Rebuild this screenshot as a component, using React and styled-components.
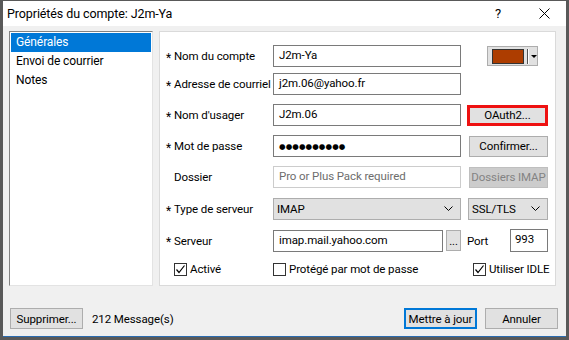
import styled, { createGlobalStyle } from "styled-components";

const GlobalStyle = createGlobalStyle`
  html, body {
    margin: 0;
    padding: 0;
    background: #ffffff;
  }
  body {
    font-family: Roboto, "Noto Sans", sans-serif;
    font-size: 11.5px;
    letter-spacing: -0.1px;
    color: #000;
  }
`;

const navItems = ["Générales", "Envoi de courrier", "Notes"];

function Check({ checked }) {
  return (
    <CheckBox>
      {checked && (
        <svg width="11" height="11" viewBox="0 0 11 11">
          <polyline
            points="1.5,5.5 4,8.5 9.5,1.5"
            fill="none"
            stroke="#000"
            strokeWidth="1.2"
          />
        </svg>
      )}
    </CheckBox>
  );
}

function Chevron() {
  return (
    <svg width="9" height="6" viewBox="0 0 9 6">
      <polyline points="0.5,0.5 4.5,4.5 8.5,0.5" fill="none" stroke="#000" strokeWidth="1" />
    </svg>
  );
}

function Label({ required, children }) {
  return (
    <LabelCell>
      <Star>{required ? "*" : ""}</Star>
      {children}
    </LabelCell>
  );
}

export default function App() {
  return (
    <>
      <GlobalStyle />
      <Window>
        <TitleBar>
          <Title>Propriétés du compte: J2m-Ya</Title>
          <TitleButtons>
            <HelpBtn>?</HelpBtn>
            <CloseBtn>
              <svg width="11" height="11" viewBox="0 0 11 11">
                <path d="M0.5 0.5 L10.5 10.5 M10.5 0.5 L0.5 10.5" stroke="#000" strokeWidth="1" />
              </svg>
            </CloseBtn>
          </TitleButtons>
        </TitleBar>
        <Body>
          <Main>
            <NavList>
              {navItems.map((item, i) => (
                <NavItem key={item} $active={i === 0}>
                  {item}
                </NavItem>
              ))}
            </NavList>
            <Panel>
              <Row $top={13}>
                <Label required>Nom du compte</Label>
                <Input>J2m-Ya</Input>
                <ColorPicker>
                  <Swatch />
                  <PickerSep />
                  <PickerArrow />
                </ColorPicker>
              </Row>
              <Row $top={6}>
                <Label required>Adresse de courriel</Label>
                <Input>j2m.06@yahoo.fr</Input>
              </Row>
              <Row>
                <Label required>Nom d'usager</Label>
                <Input>J2m.06</Input>
                <Focused>
                  <Button $wide>OAuth2...</Button>
                </Focused>
              </Row>
              <Row>
                <Label required>Mot de passe</Label>
                <Input>
                  <Dots>●●●●●●●●●●</Dots>
                </Input>
                <Button $inset>Confirmer...</Button>
              </Row>
              <Row>
                <Label>Dossier</Label>
                <Input $disabled>Pro or Plus Pack required</Input>
                <Button $inset $disabled>
                  Dossiers IMAP
                </Button>
              </Row>
              <Row $top={10}>
                <Label required>Type de serveur</Label>
                <Select>
                  IMAP
                  <Chevron />
                </Select>
                <Select $short>
                  SSL/TLS
                  <Chevron />
                </Select>
              </Row>
              <Row>
                <Label required>Serveur</Label>
                <ServerCell>
                  <Input $grow>imap.mail.yahoo.com</Input>
                  <DotsButton>...</DotsButton>
                </ServerCell>
                <PortCell>
                  <span>Port</span>
                  <PortInput>993</PortInput>
                </PortCell>
              </Row>
              <Row $top={7}>
                <CheckLabel $indent={8}>
                  <Check checked />
                  Activé
                </CheckLabel>
                <CheckLabel>
                  <Check />
                  Protégé par mot de passe
                </CheckLabel>
                <CheckLabel $indent={6}>
                  <Check checked />
                  Utiliser IDLE
                </CheckLabel>
              </Row>
            </Panel>
          </Main>
          <Footer>
            <FooterButton>Supprimer...</FooterButton>
            <Count>212 Message(s)</Count>
            <Spacer />
            <FooterButton $default>Mettre à jour</FooterButton>
            <FooterButton>Annuler</FooterButton>
          </Footer>
        </Body>
      </Window>
    </>
  );
}

const Window = styled.div`
  width: 569px;
  height: 340px;
  box-sizing: border-box;
  display: flex;
  flex-direction: column;
  border: 3px solid #595959;
  border-top-width: 1px;
  box-shadow: inset 0 -1px 0 #2b6cb0;
  background: #f0f0f0;
`;

const TitleBar = styled.div`
  height: 25px;
  flex: none;
  display: flex;
  align-items: center;
  background: #ffffff;
  padding-left: 4px;
`;

const Title = styled.div`
  flex: 1;
  font-size: 12.5px;
`;

const TitleButtons = styled.div`
  display: flex;
  align-items: center;
  height: 100%;
  margin-right: -1px;
`;

const HelpBtn = styled.div`
  width: 46px;
  text-align: center;
  font-size: 13px;
`;

const CloseBtn = styled.div`
  width: 46px;
  display: flex;
  justify-content: center;
  align-items: center;
`;

const Body = styled.div`
  flex: 1;
  display: flex;
  flex-direction: column;
  padding: 5px 0 0 6px;
`;

const Main = styled.div`
  display: flex;
  gap: 6px;
  height: 255px;
`;

const NavList = styled.div`
  width: 144px;
  box-sizing: border-box;
  padding: 1px;
  background: #ffffff;
  border: 1px solid;
  border-color: #828282 #e3e3e3 #e3e3e3 #828282;
`;

const NavItem = styled.div`
  height: 19px;
  line-height: 19px;
  padding-left: 5px;
  font-size: 12px;
  background: ${({ $active }) => ($active ? "#0078d7" : "transparent")};
  color: ${({ $active }) => ($active ? "#ffffff" : "#000000")};
`;

const Panel = styled.div`
  width: 397px;
  box-sizing: border-box;
  background: #ffffff;
  border: 1px solid #dadada;
  display: flex;
  flex-direction: column;
  padding-left: 6px;
`;

const Row = styled.div`
  display: grid;
  grid-template-columns: 107px 188px 6px 81px;
  height: 22px;
  align-items: center;
  margin-top: ${({ $top }) => ($top ?? 9)}px;
  & > :nth-child(3) {
    grid-column: 4;
  }
`;

const LabelCell = styled.div`
  display: flex;
  align-items: center;
  white-space: nowrap;
`;

const Star = styled.span`
  width: 8px;
  flex: none;
  font-size: 12px;
  line-height: 12px;
  align-self: flex-start;
  margin-top: 3px;
`;

const Input = styled.div`
  height: 22px;
  box-sizing: border-box;
  border: 1px solid ${({ $disabled }) => ($disabled ? "#cccccc" : "#7a7a7a")};
  background: #ffffff;
  color: ${({ $disabled }) => ($disabled ? "#6d6d6d" : "#000")};
  padding: 0 5px;
  line-height: 19px;
  white-space: nowrap;
  overflow: hidden;
  flex: ${({ $grow }) => ($grow ? 1 : "none")};
`;

const Dots = styled.span`
  font-family: "DejaVu Sans", sans-serif;
  font-size: 7.5px;
  letter-spacing: 0.1px;
`;

const ColorPicker = styled.div`
  justify-self: start;
  margin-left: 20px;
  width: 51px;
  height: 20px;
  box-sizing: border-box;
  background: #e1e1e1;
  border: 1px solid #adadad;
  display: flex;
  align-items: center;
  padding-left: 4px;
`;

const Swatch = styled.div`
  width: 33px;
  height: 15px;
  box-sizing: border-box;
  background: #ad3d00;
  border: 1px solid #333;
`;

const PickerSep = styled.div`
  width: 1px;
  height: 15px;
  margin-left: 3px;
  background: #555;
  box-shadow: 1px 0 0 #fff;
`;

const PickerArrow = styled.div`
  margin-left: 3px;
  width: 0;
  height: 0;
  border-left: 3px solid transparent;
  border-right: 3px solid transparent;
  border-top: 3px solid #000;
`;

const Focused = styled.div`
  border: 3px solid #ee1111;
  height: 21px;
  box-sizing: border-box;
  display: flex;
`;

const Button = styled.div`
  height: ${({ $wide }) => ($wide ? "15px" : "21px")};
  ${({ $wide }) => ($wide ? "flex: 1;" : "")}
  box-sizing: border-box;
  margin-left: ${({ $inset }) => ($inset ? "2px" : "0")};
  background: ${({ $disabled }) => ($disabled ? "#cccccc" : "#e1e1e1")};
  border: 1px solid ${({ $disabled }) => ($disabled ? "#bfbfbf" : "#adadad")};
  color: ${({ $disabled }) => ($disabled ? "#838383" : "#000")};
  display: flex;
  align-items: center;
  justify-content: center;
  white-space: nowrap;
  ${({ $wide }) => ($wide ? "border: none;" : "")}
`;

const Select = styled.div`
  height: 22px;
  box-sizing: border-box;
  background: #e1e1e1;
  border: 1px solid #adadad;
  display: flex;
  align-items: center;
  justify-content: space-between;
  padding: 0 7px 0 3px;
  ${({ $short }) => ($short ? "margin-left: 1px;" : "")}
`;

const ServerCell = styled.div`
  display: flex;
  align-items: center;
  gap: 3px;
`;

const DotsButton = styled.div`
  width: 15px;
  height: 21px;
  box-sizing: border-box;
  background: #e1e1e1;
  border: 1px solid #adadad;
  text-align: center;
  line-height: 22px;
  font-size: 11px;
`;

const PortCell = styled.div`
  display: flex;
  align-items: center;
  justify-content: space-between;
`;

const PortInput = styled.div`
  width: 38px;
  height: 23px;
  box-sizing: border-box;
  border: 1px solid #7a7a7a;
  padding: 0 4px;
  line-height: 18px;
`;

const CheckLabel = styled.label`
  display: flex;
  align-items: center;
  gap: 3px;
  padding-left: ${({ $indent }) => $indent ?? 0}px;
  white-space: nowrap;
`;

const CheckBox = styled.span`
  width: 13px;
  height: 13px;
  box-sizing: border-box;
  border: 1px solid #333333;
  background: #ffffff;
  display: flex;
  align-items: center;
  justify-content: center;
`;

const Footer = styled.div`
  display: flex;
  align-items: center;
  margin-top: 22px;
  padding: 0 8px 0 1px;
`;

const FooterButton = styled.div`
  width: 73px;
  height: 21px;
  box-sizing: border-box;
  white-space: nowrap;
  background: #e1e1e1;
  border: ${({ $default }) => ($default ? "2px solid #0078d7" : "1px solid #adadad")};
  display: flex;
  align-items: center;
  justify-content: center;
  margin-left: ${({ $default }) => ($default ? "0" : "8px")};
  &:first-child {
    margin-left: 0;
  }
`;

const Count = styled.span`
  margin-left: 9px;
`;

const Spacer = styled.div`
  flex: 1;
`;
